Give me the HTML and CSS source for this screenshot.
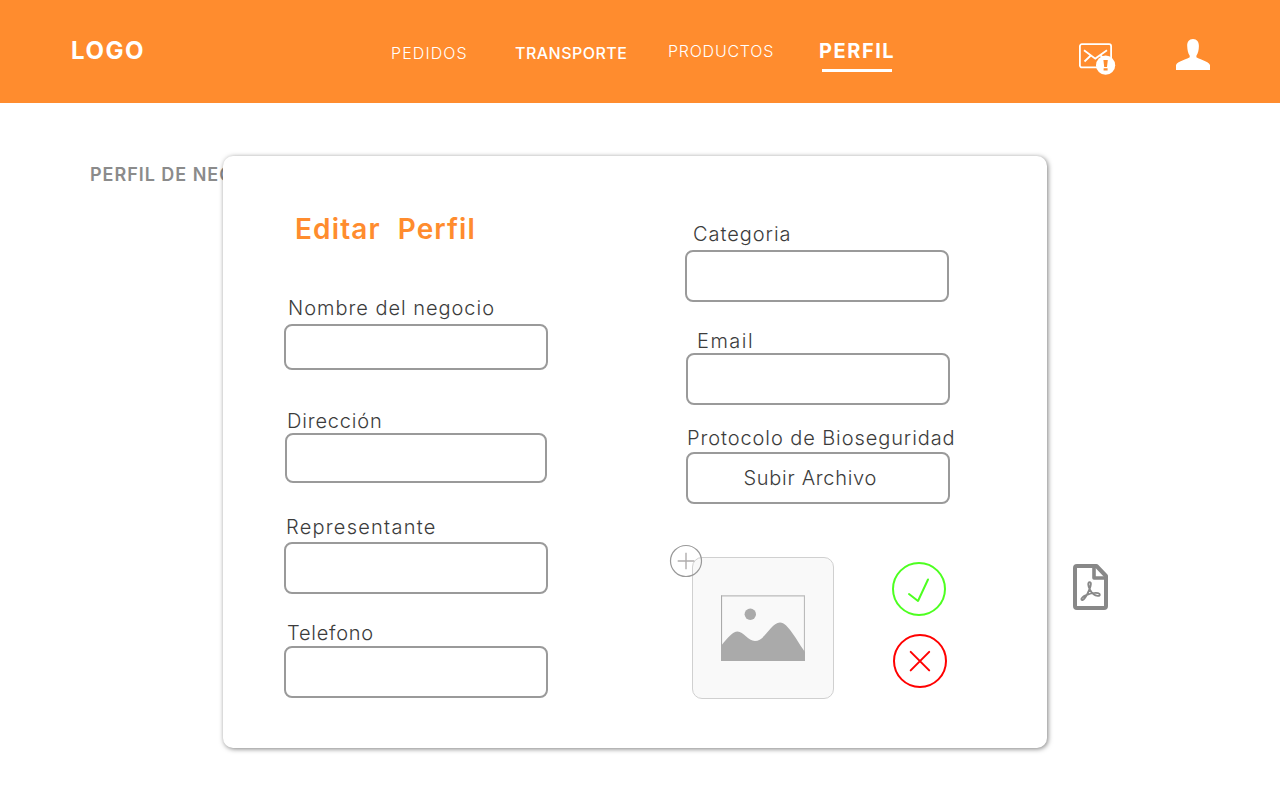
FILE: index.html
```html
<!DOCTYPE html>
<html lang="es">
<head>
<meta charset="utf-8">
<title>Editar Perfil</title>
<link rel="stylesheet" href="styles.css">
</head>
<body>
<header class="topbar">
  <div class="logo">LOGO</div>
  <a class="nav nav-pedidos">PEDIDOS</a>
  <a class="nav nav-transporte">TRANSPORTE</a>
  <a class="nav nav-productos">PRODUCTOS</a>
  <a class="nav-active">PERFIL</a>
  <svg class="mail" width="38" height="34" viewBox="0 0 38 34" fill="none" stroke="#fff">
    <rect x="1.9" y="2.2" width="31.2" height="23.2" rx="2" stroke-width="1.8"/>
    <path d="M6 8.2 17.3 16.6 29 8.2M6.5 19.5l6.300-6M22.500 13.500l5 4" stroke-width="1.8"/>
    <circle cx="27.6" cy="23.2" r="9.6" fill="#fff" stroke="none"/>
    <path d="M25.400 18h4.400l-.8 7h-2.800zM25.600 26.200h4v2.400h-4z" fill="#ff8c2e" stroke="none"/>
  </svg>
  <svg class="user" width="34" height="31" viewBox="0 0 34 31" fill="#fff">
    <path d="M17 0c-4 0-6 3-5.800 7 .2 4 .8 7.500 2.500 9.800v1.400C12.700 19.500 1.500 22 0 26v5h34v-5c-1.500-4-12.500-6.500-13.600-7.800v-1.400C22.100 14.500 22.800 11 22.900 7 23 3 21 0 17 0z"/>
  </svg>
</header>

<main class="page">
  <h1 class="page-title">PERFIL DE NEGOCIO</h1>
  <svg class="pdf" width="35" height="46" viewBox="0 0 35 46" fill="none" stroke="#888" stroke-linejoin="round">
    <path d="M4 2h19.500l9.500 10v30q0 2-2 2H4q-2 0-2-2V4q0-2 2-2z" stroke-width="4"/>
    <path d="M21 2v12h12" stroke-width="3.600"/>
    <path d="M16.600 18.200c-2 0-1.500 4 .3 7.400 1.700 3.200 4.600 5.900 7.900 6.300 2.600.3 2.600-2.400.3-2.800-3.900-.6-8.500.5-12.500 2.300-2.600 1.200-4.900 3.200-4.100 4.300 1.300 1.500 4.300-2.500 6-6 1.600-3.300 3.100-7.600 3.300-9.300.2-1.300-.3-2.200-1.200-2.200z" stroke-width="1.900"/>
  </svg>

  <section class="dialog">
    <div class="column column-left">
      <h2 class="dialog-title"><span>Editar</span><span class="second">Perfil</span></h2>
      <div class="field nombre"><label for="nombre">Nombre del negocio</label><input id="nombre"></div>
      <div class="field direccion"><label for="direccion">Dirección</label><input id="direccion"></div>
      <div class="field representante"><label for="representante">Representante</label><input id="representante"></div>
      <div class="field telefono"><label for="telefono">Telefono</label><input id="telefono"></div>
    </div>
    <div class="column column-right">
      <div class="field categoria"><label for="categoria">Categoria</label><input id="categoria"></div>
      <div class="field email"><label for="email">Email</label><input id="email"></div>
      <div class="field protocolo"><label>Protocolo de Bioseguridad</label><button class="upload">Subir Archivo</button></div>
      <div class="media-row">
        <div class="picture">
          <svg width="84" height="66" viewBox="0 0 84 66">
            <path d="M.5 66V.800h83V66" fill="none" stroke="#bbb" stroke-width="1.200"/>
            <path d="M.5 66V.500" stroke="#aaa"/>
            <circle cx="29.300" cy="19.200" r="5.700" fill="#aaa"/>
            <path d="M0 51C7 42 12 36.500 16.500 36.500c6 0 10.500 9.500 17.500 9.500C44 46 50 27.500 59 27.500c8 0 17 18.500 25 29.500v9H0z" fill="#aaa"/>
          </svg>
          <svg class="add" width="34" height="34" viewBox="0 0 34 34" fill="none">
            <circle cx="17" cy="17" r="15.500" stroke="#999" stroke-width="1.200"/>
            <path d="M8.700 17h16.600M17 8.700v16.600" stroke="#b0adad" stroke-width="1.400"/>
          </svg>
        </div>
        <div class="actions">
          <svg width="54" height="54" viewBox="0 0 54 54" fill="none" stroke="#4dff20" stroke-width="2">
            <circle cx="27" cy="27" r="26"/>
            <path d="M17 32l9 7 10-21.500" stroke-linecap="round" stroke-linejoin="round"/>
          </svg>
          <svg class="cancel" width="54" height="54" viewBox="0 0 54 54" fill="none" stroke="#ff0000" stroke-width="2">
            <circle cx="27" cy="27" r="26"/>
            <path d="M17.700 17.900l18.500 18.500M36.200 17.900L17.700 36.400" stroke-linecap="round"/>
          </svg>
        </div>
      </div>
    </div>
  </section>
</main>
</body>
</html>
```

FILE: styles.css
```css
* { box-sizing: border-box; }
body { margin: 0; font-family: "Inter", sans-serif; background: #fff; color: #3c3c3c; height: 800px; overflow: hidden; }

.topbar {
  display: grid;
  grid-template-columns: 320px 124px 153px 151px 259px 98px 34px;
  align-items: start;
  height: 103px;
  padding-left: 71px;
  background: #ff8c2e;
  color: #fff;
}
.logo { margin-top: 36px; font-size: 24px; line-height: 29px; font-weight: 700; letter-spacing: 1.55px; }
.nav { font-size: 16px; line-height: 20px; }
.nav-pedidos { margin-top: 43px; font-weight: 300; letter-spacing: 1.1px; }
.nav-transporte { margin-top: 43px; font-weight: 500; letter-spacing: .47px; }
.nav-productos { margin-top: 41px; font-weight: 300; letter-spacing: .76px; }
.nav-active { margin-top: 39px; font-size: 20px; line-height: 24px; font-weight: 700; letter-spacing: 1.55px; }
.nav-active::after { content: ""; display: block; width: 70px; height: 3px; margin: 6px 0 0 3px; background: #fff; }
.mail { margin-top: 42px; }
.user { margin-top: 39px; }

.page { position: relative; height: 697px; padding: 61px 0 0 90px; }
.page-title { margin: 0; font-size: 18px; line-height: 21px; font-weight: 600; letter-spacing: .97px; color: #8b8b8b; }
.pdf { display: block; margin: 379px 0 0 983px; }

.dialog {
  position: absolute;
  left: 223px;
  top: 53px;
  width: 824px;
  height: 592px;
  display: grid;
  grid-template-columns: 401px 1fr;
  padding-left: 61px;
  border-radius: 10px;
  background: #fff;
  box-shadow: 1px 1px 5px rgba(0, 0, 0, .5);
}
.column { display: flex; flex-direction: column; align-items: flex-start; }
.dialog-title { display: flex; margin: 56px 0 50px 11px; font-size: 28px; line-height: 34px; font-weight: 600; letter-spacing: 1.13px; color: #ff8c2e; }
.dialog-title .second { margin-left: 17px; letter-spacing: 1.05px; }

.field { display: flex; flex-direction: column; font-size: 20px; font-weight: 300; }
.field label { line-height: 24px; white-space: nowrap; }
.field input, .upload { width: 264px; height: 52px; border: 2px solid #9a9a9a; border-radius: 8px; background: #fff; padding: 0 10px; font: inherit; color: inherit; }

.nombre label { margin: 0 0 4px 4px; letter-spacing: .97px; }
.nombre input { height: 46px; }
.direccion { margin: 39px 0 0 1px; }
.direccion label { margin-left: 2px; letter-spacing: .83px; }
.direccion input { width: 262px; height: 50px; }
.representante { margin-top: 32px; }
.representante label { margin: 0 0 3px 2px; letter-spacing: 1.24px; }
.telefono { margin-top: 27px; }
.telefono label { margin: 0 0 1px 3px; letter-spacing: .75px; }

.categoria { margin-top: 66px; }
.categoria label { margin: 0 0 4px 8px; letter-spacing: .95px; }
.email { margin: 27px 0 0 1px; }
.email label { margin-left: 11px; letter-spacing: 1.5px; }
.protocolo { margin: 21px 0 0 1px; }
.protocolo label { margin: 0 0 2px 1px; letter-spacing: .91px; }
.upload { padding: 0 0 0 55.5px; text-align: left; line-height: 24px; letter-spacing: .7px; }

.media-row { display: flex; margin: 53px 0 0 7px; gap: 58px; }
.picture { position: relative; display: flex; width: 142px; height: 142px; padding: 37px 0 0 28px; border: 1px solid #d0d0d0; border-radius: 10px; background: #f9f9f9; }
.add { position: absolute; left: -24px; top: -14px; }
.actions { display: flex; flex-direction: column; gap: 18px; margin-top: 5px; }
.cancel { margin-left: 1px; }
```
